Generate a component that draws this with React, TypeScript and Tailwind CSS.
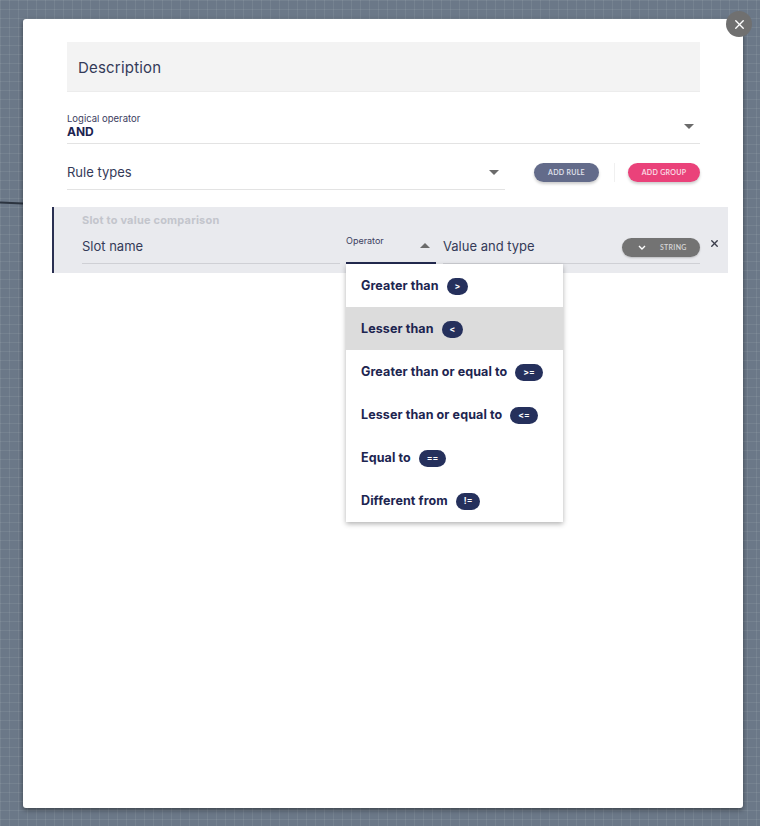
import React from 'react';
import { X } from 'lucide-react';

const operators = [
  { label: 'Greater than', sign: '>' },
  { label: 'Lesser than', sign: '<' },
  { label: 'Greater than or equal to', sign: '>=' },
  { label: 'Lesser than or equal to', sign: '<=' },
  { label: 'Equal to', sign: '==' },
  { label: 'Different from', sign: '!=' },
];

const CaretDown = () => (
  <svg width="10" height="6" viewBox="0 0 10 6" className="shrink-0">
    <path d="M0 0 L10 0 L5 5 Z" fill="#6b6b6b" />
  </svg>
);

const CaretUp = () => (
  <svg width="10" height="6" viewBox="0 0 10 6" className="shrink-0">
    <path d="M0 5 L10 5 L5 0 Z" fill="#6b6b6b" />
  </svg>
);

const App: React.FC = () => {
  return (
    <div
      className="relative w-[760px] h-[826px] overflow-hidden bg-[#6b7888] bg-[linear-gradient(rgba(255,255,255,0.07)_1px,transparent_1px),linear-gradient(90deg,rgba(255,255,255,0.07)_1px,transparent_1px)] bg-[size:9px_9px] pt-[19px] pl-[23px] font-['Inter','Noto_Sans',sans-serif]"
    >
      {/* line from the canvas behind the modal */}
      <div className="absolute left-0 top-[202px] w-[23px] h-[2px] bg-[#2c3440] rotate-[3deg]" />

      {/* Modal */}
      <div className="relative w-[720px] h-[789px] bg-white rounded-[3px] shadow-[0_2px_5px_rgba(0,0,0,0.45)] pt-[23px] pl-[44px] pr-[43px]">
        {/* Description */}
        <div className="h-[50px] bg-[#f3f3f3] border-b border-[#ececec] flex items-center pl-[11px] pt-[3px] text-[15px] text-[#343a58] tracking-[0.2px]">
          Description
        </div>

        {/* Logical operator */}
        <div className="mt-[20px] h-[32px] border-b border-[#e3e3e3] flex items-end justify-between pb-[4px]">
          <div className="flex flex-col">
            <span className="text-[9.5px] leading-[12px] text-[#3b4060]">Logical operator</span>
            <span className="text-[12px] leading-[14px] font-bold text-[#1c2350]">AND</span>
          </div>
          <div className="mb-[9px] mr-[6px]">
            <CaretDown />
          </div>
        </div>

        {/* Rule types + buttons */}
        <div className="mt-[8px] h-[38px] flex items-stretch">
          <div className="w-[438px] border-b border-[#e3e3e3] flex items-center justify-between pt-[4px] pr-[6px]">
            <span className="text-[13px] text-[#343a58]">Rule types</span>
            <CaretDown />
          </div>
          <div className="flex items-center pt-[3px]">
            <button className="ml-[29px] w-[65px] h-[19px] rounded-full bg-[#636b8a] shadow-[0_2px_3px_rgba(0,0,0,0.2)] text-[7px] tracking-[0.3px] text-[#e4e6f0] font-['Lato',sans-serif] font-semibold">
              ADD RULE
            </button>
            <div className="ml-[15px] w-px h-[19px] bg-[#f0f0f0]" />
            <button className="ml-[13px] w-[72px] h-[19px] rounded-full bg-[#ea427a] shadow-[0_2px_3px_rgba(0,0,0,0.2)] text-[7px] tracking-[0.3px] text-[#fbe3ec] font-['Lato',sans-serif] font-semibold">
              ADD GROUP
            </button>
          </div>
        </div>

        {/* Rule row */}
        <div className="mt-[17px] ml-[-15px] mr-[-28px] h-[66px] bg-[#e9eaee] border-l-2 border-[#2a3052] pl-[28px] pt-[6px]">
          <div className="text-[11px] leading-[14px] font-bold text-[#c3c5cc] tracking-[0.2px]">
            Slot to value comparison
          </div>
          <div className="flex items-stretch h-[37px]">
            {/* Slot name */}
            <div className="w-[258px] border-b border-[#cfd0d5] flex items-center pt-[4px]">
              <span className="text-[13px] text-[#343a58]">Slot name</span>
            </div>

            {/* Operator */}
            <div className="relative ml-[6px] w-[90px] border-b-2 border-[#232a50] flex items-start justify-between">
              <span className="mt-[7px] text-[9px] text-[#3b4060]">Operator</span>
              <div className="mt-[16px] mr-[6px]">
                <CaretUp />
              </div>

              {/* Dropdown */}
              <div className="absolute left-0 top-[37px] w-[217px] bg-white shadow-[0_2px_5px_rgba(0,0,0,0.3)] z-10">
                {operators.map((op, i) => (
                  <div
                    key={op.sign}
                    className={`h-[43px] flex items-center pl-[15px] pt-[2px] ${i === 1 ? 'bg-[#dcdcdc]' : ''}`}
                  >
                    <span className="text-[12.5px] font-bold text-[#1d2550] tracking-[0.1px]">{op.label}</span>
                    <span className="ml-[8px] min-w-[21px] h-[17px] px-[8px] rounded-full bg-[#25305c] flex items-center justify-center text-[8.5px] font-bold text-white">
                      {op.sign}
                    </span>
                  </div>
                ))}
              </div>
            </div>

            {/* Value and type */}
            <div className="ml-[7px] w-[257px] border-b border-[#cfd0d5] flex items-center justify-between pt-[4px]">
              <span className="text-[13px] text-[#343a58]">Value and type</span>
              <div className="w-[78px] h-[19px] rounded-full bg-[#737373] shadow-[0_1px_2px_rgba(0,0,0,0.2)] flex items-center pl-[16px]">
                <svg width="8" height="5" viewBox="0 0 8 5">
                  <path d="M1 1 L4 4 L7 1" stroke="#ffffff" strokeWidth="1.4" fill="none" />
                </svg>
                <span className="ml-[14px] text-[7px] tracking-[0.3px] text-[#d8d8d8] font-['Lato',sans-serif] font-semibold">
                  STRING
                </span>
              </div>
            </div>

            {/* Remove */}
            <div className="w-[28px] flex items-center justify-center pb-[4px]">
              <X size={11} strokeWidth={3} color="#3a3d4a" />
            </div>
          </div>
        </div>

        {/* Close button */}
        <button className="absolute right-[-9px] top-[-8px] w-[26px] h-[26px] rounded-full bg-[#707070] flex items-center justify-center">
          <X size={15} strokeWidth={2.2} color="#ffffff" />
        </button>
      </div>
    </div>
  );
};

export default App;
